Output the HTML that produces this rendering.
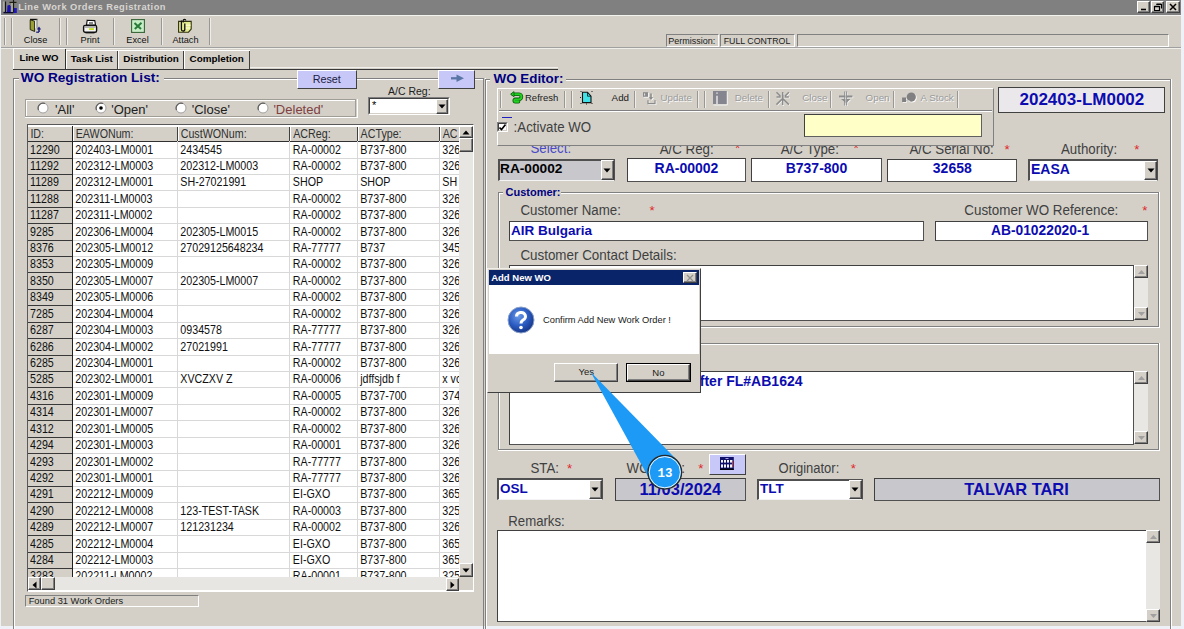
<!DOCTYPE html>
<html><head><meta charset="utf-8"><style>
html,body{margin:0;padding:0;width:1184px;height:629px;overflow:hidden;background:#eef1f8;}
body div, body svg{position:absolute;}
.t{white-space:nowrap;font-family:"Liberation Sans", sans-serif;}
body{font-family:"Liberation Sans", sans-serif;}
</style></head><body>
<div style="left:0;top:0;width:1184px;height:629px;background:#eef1f8;"></div><div style="left:1px;top:0px;width:1180px;height:626px;background:#d4d0c8;"></div><div style="left:1px;top:0px;width:1180px;height:14.5px;background:#808080;"></div><svg style="left:0;top:0;width:18px;height:14px" viewBox="0 0 18 14"><rect x="3.6" y="1.5" width="0.9" height="10" fill="#e8e8d8"/><rect x="11.6" y="3" width="1" height="9" fill="#d8e0b0"/><path d="M7.5 5.5c1.5-1 3-0.5 3.2 1V12.6H7z" fill="#1a10b0"/><rect x="13.8" y="8" width="3" height="5" fill="#2018c0"/><rect x="4.8" y="1.5" width="1.3" height="10.5" fill="#101010"/><rect x="3.5" y="12" width="10" height="1.3" fill="#080830"/><rect x="9.5" y="1.8" width="7" height="1.2" fill="#202010"/><rect x="12.9" y="0" width="1.2" height="12.5" fill="#181818"/></svg><div class="t" style="left:18.20px;top:2.53px;font-size:9.3px;line-height:9.3px;color:#d8d5d0;font-weight:bold;letter-spacing:0.45px;">Line Work Orders Registration</div><div style="left:1137px;top:1px;width:13px;height:12px;background:#d4d0c8;border-top:1px solid #fff;border-left:1px solid #fff;border-bottom:1px solid #404040;border-right:1px solid #404040;box-sizing:border-box;"></div><div style="left:1138px;top:11px;width:11px;height:1px;background:#808080;"></div><div style="left:1148px;top:2px;width:1px;height:10px;background:#808080;"></div><div style="left:1151px;top:1px;width:13px;height:12px;background:#d4d0c8;border-top:1px solid #fff;border-left:1px solid #fff;border-bottom:1px solid #404040;border-right:1px solid #404040;box-sizing:border-box;"></div><div style="left:1152px;top:11px;width:11px;height:1px;background:#808080;"></div><div style="left:1162px;top:2px;width:1px;height:10px;background:#808080;"></div><div style="left:1166px;top:1px;width:13.5px;height:12px;background:#d4d0c8;border-top:1px solid #fff;border-left:1px solid #fff;border-bottom:1px solid #404040;border-right:1px solid #404040;box-sizing:border-box;"></div><div style="left:1167px;top:11px;width:11.5px;height:1px;background:#808080;"></div><div style="left:1177.5px;top:2px;width:1px;height:10px;background:#808080;"></div><svg style="left:1137px;top:1px;width:42px;height:12px" viewBox="0 0 42 12"><path d="M4 8.5h5" stroke="#000" stroke-width="1.6"/><path d="M17.5 5.5h5v4h-5zM19.5 3.5h5v4" stroke="#000" stroke-width="1.2" fill="none"/><path d="M17.5 5.5h5M19.5 3.2h5" stroke="#000" stroke-width="1.6"/><path d="M33 3l6 6M39 3l-6 6" stroke="#000" stroke-width="1.5"/></svg><div style="left:1px;top:14.5px;width:1180px;height:1.5px;background:#f4f2ee;"></div><div style="left:4.0px;top:18px;width:1px;height:27px;background:#9a9792;"></div><div style="left:5.0px;top:18px;width:1px;height:27px;background:#eeede9;"></div><div style="left:11.0px;top:18px;width:1px;height:27px;background:#9a9792;"></div><div style="left:12.0px;top:18px;width:1px;height:27px;background:#eeede9;"></div><div style="left:59.0px;top:18px;width:1px;height:27px;background:#9a9792;"></div><div style="left:60.0px;top:18px;width:1px;height:27px;background:#eeede9;"></div><div style="left:66.0px;top:18px;width:1px;height:27px;background:#9a9792;"></div><div style="left:67.0px;top:18px;width:1px;height:27px;background:#eeede9;"></div><div style="left:113.0px;top:18px;width:1px;height:27px;background:#9a9792;"></div><div style="left:114.0px;top:18px;width:1px;height:27px;background:#eeede9;"></div><div style="left:161.0px;top:18px;width:1px;height:27px;background:#9a9792;"></div><div style="left:162.0px;top:18px;width:1px;height:27px;background:#eeede9;"></div><div style="left:209.0px;top:18px;width:1px;height:27px;background:#9a9792;"></div><div style="left:210.0px;top:18px;width:1px;height:27px;background:#eeede9;"></div><div style="left:1px;top:47px;width:1180px;height:1px;background:#a0a0a0;"></div><div style="left:1px;top:48px;width:1180px;height:1px;background:#f0eee8;"></div><div class="t" style="left:5.50px;top:35.61px;font-size:9.2px;line-height:9.2px;color:#101010;width:60px;text-align:center;">Close</div><div class="t" style="left:60.00px;top:35.61px;font-size:9.2px;line-height:9.2px;color:#101010;width:60px;text-align:center;">Print</div><div class="t" style="left:107.50px;top:35.61px;font-size:9.2px;line-height:9.2px;color:#101010;width:60px;text-align:center;">Excel</div><div class="t" style="left:155.50px;top:35.61px;font-size:9.2px;line-height:9.2px;color:#101010;width:60px;text-align:center;">Attach</div><svg style="left:28px;top:17px;width:16px;height:17px" viewBox="0 0 16 17"><rect x="2.3" y="2.3" width="7" height="9" fill="#fff"/><path d="M2 2.5h7.4" stroke="#101010" stroke-width="1.4"/><path d="M9 2.5v9" stroke="#808080" stroke-width="1.2"/><path d="M2.2 2.8L6.6 4.2V14.5L2.2 12.6z" fill="#9aa032" stroke="#1a1a08" stroke-width="0.9"/><path d="M11 15V11.8" stroke="#20207a" stroke-width="1.6"/><path d="M8.8 12.6H13.2L11 9.6z" fill="#20207a"/><path d="M8.2 15.2H11" stroke="#20207a" stroke-width="1.3"/></svg><svg style="left:82px;top:19px;width:16px;height:15px" viewBox="0 0 16 15"><path d="M5.2 1.2L12.8 1.6L13.5 6H4.5z" fill="#fff" stroke="#101010" stroke-width="1.1"/><path d="M7 4h4" stroke="#101010" stroke-width="1"/><rect x="1.6" y="6.4" width="13" height="6.8" rx="1.5" fill="#f4f4f4" stroke="#101010" stroke-width="1.4"/><path d="M2.5 8h11" stroke="#707070" stroke-width="1"/><rect x="7" y="9.2" width="5" height="1.8" fill="#c8e020"/><path d="M3.5 13.8h9" stroke="#101010" stroke-width="1.2"/></svg><svg style="left:131px;top:19px;width:14px;height:14px" viewBox="0 0 14 14"><rect x="0.6" y="0.6" width="12.8" height="12.8" fill="#d8f4d8" stroke="#3c6a3c" stroke-width="1.2"/><rect x="2" y="2" width="10" height="10" fill="#c4eec4"/><path d="M3.5 4l6.5 6M10.5 3.8L3.8 10" stroke="#2a7a3a" stroke-width="2"/></svg><svg style="left:178px;top:18px;width:15px;height:15px" viewBox="0 0 15 15"><path d="M0.6 3.4H13.2V11L10.5 14.2H0.6z" fill="#e4ec90" stroke="#303010" stroke-width="1.1"/><path d="M6.5 7.2H12.5M6.5 10H12" stroke="#f8f8c0" stroke-width="1.4"/><path d="M5.2 4.5V2.5c0-1.6 2.6-1.6 2.6 0" stroke="#101010" stroke-width="1.2" fill="none"/><path d="M3.4 2.5V11.5c0 2 3.4 2 3.4 0V5.5" stroke="#101010" stroke-width="1.3" fill="none"/></svg><div style="left:666px;top:34px;width:53px;height:13px;border-top:1px solid #808080;border-left:1px solid #808080;border-bottom:1px solid #fff;border-right:1px solid #fff;box-sizing:border-box;"></div><div style="left:720px;top:34px;width:74.5px;height:13px;border-top:1px solid #808080;border-left:1px solid #808080;border-bottom:1px solid #fff;border-right:1px solid #fff;box-sizing:border-box;"></div><div style="left:797px;top:34px;width:372px;height:13px;border-top:1px solid #808080;border-left:1px solid #808080;border-bottom:1px solid #fff;border-right:1px solid #fff;box-sizing:border-box;"></div><div class="t" style="left:668.20px;top:36.58px;font-size:9.0px;line-height:9.0px;color:#202020;">Permission:</div><div class="t" style="left:723.70px;top:36.75px;font-size:8.8px;line-height:8.8px;color:#202020;">FULL CONTROL</div><div style="left:249.5px;top:66.6px;width:308px;height:1px;background:#f2f0ec;"></div><div style="left:13px;top:68.5px;width:544.7px;height:1.1px;background:#383838;"></div><div style="left:13px;top:48.4px;width:52px;height:20.5px;background:#d4d0c8;border-left:1px solid #fff;border-top:1px solid #fff;box-sizing:border-box;"></div><div style="left:64.5px;top:49px;width:1px;height:20px;background:#303030;"></div><div class="t" style="left:13.00px;top:52.87px;font-size:9.6px;line-height:9.6px;color:#000;font-weight:bold;width:52px;text-align:center;">Line WO</div><div style="left:65.5px;top:50px;width:52.5px;height:18.5px;background:#d4d0c8;border-top:1px solid #fff;box-sizing:border-box;"></div><div style="left:117px;top:51px;width:1px;height:18px;background:#404040;"></div><div style="left:65.5px;top:51px;width:1px;height:18px;background:#fff;"></div><div class="t" style="left:65.50px;top:54.22px;font-size:9.9px;line-height:9.9px;color:#000;font-weight:bold;width:52.5px;text-align:center;">Task List</div><div style="left:118px;top:50px;width:66px;height:18.5px;background:#d4d0c8;border-top:1px solid #fff;box-sizing:border-box;"></div><div style="left:183px;top:51px;width:1px;height:18px;background:#404040;"></div><div style="left:118px;top:51px;width:1px;height:18px;background:#fff;"></div><div class="t" style="left:118.00px;top:54.22px;font-size:9.9px;line-height:9.9px;color:#000;font-weight:bold;width:66px;text-align:center;">Distribution</div><div style="left:184px;top:50px;width:65.5px;height:18.5px;background:#d4d0c8;border-top:1px solid #fff;box-sizing:border-box;"></div><div style="left:248.5px;top:51px;width:1px;height:18px;background:#404040;"></div><div style="left:184px;top:51px;width:1px;height:18px;background:#fff;"></div><div class="t" style="left:184.00px;top:54.22px;font-size:9.9px;line-height:9.9px;color:#000;font-weight:bold;width:65.5px;text-align:center;">Completion</div><div style="left:12.8px;top:78.4px;width:471.7px;height:560px;border:1px solid #808080;box-sizing:border-box;"></div><div style="left:13.8px;top:79.4px;width:469.7px;height:558px;border:1px solid #fff;box-sizing:border-box;border-right:none;border-bottom:none;"></div><div style="left:12.8px;top:638.4px;width:472.7px;height:1px;background:#fff;"></div><div style="left:484.5px;top:78.4px;width:1px;height:561px;background:#fff;"></div><div style="left:19px;top:71px;width:145px;height:14px;background:#d4d0c8;"></div><div class="t" style="left:20.80px;top:71.29px;font-size:13.6px;line-height:13.6px;color:#000080;font-weight:bold;">WO Registration List:</div><div style="left:296.5px;top:70px;width:60.5px;height:18.5px;background:#c8c8f8;border-top:1px solid #fff;border-left:1px solid #fff;border-bottom:1px solid #404040;border-right:1px solid #404040;box-sizing:border-box;"></div><div class="t" style="left:296.50px;top:74.46px;font-size:10.8px;line-height:10.8px;color:#202040;width:60.5px;text-align:center;">Reset</div><div style="left:438.1px;top:70.1px;width:37px;height:18.7px;background:#c8c8f8;border-top:1px solid #fff;border-left:1px solid #fff;border-bottom:1px solid #404040;border-right:1px solid #404040;box-sizing:border-box;"></div><svg style="left:449.5px;top:74px;width:15px;height:9px" viewBox="0 0 15 9"><path d="M1 4.3h8" stroke="#5a76a6" stroke-width="2.3"/><path d="M6.5 0.6l7.5 3.7-7.5 3.8z" fill="#5a76a6"/></svg><div style="left:25.3px;top:99.4px;width:331.2px;height:18px;border:1px solid #a09c96;box-sizing:border-box;"></div><div style="left:26.3px;top:100.4px;width:329.2px;height:16px;border-top:1px solid #fff;border-left:1px solid #fff;box-sizing:border-box;"></div><div style="left:25.3px;top:117.4px;width:332.2px;height:1px;background:#fff;"></div><div style="left:356.5px;top:99.4px;width:1px;height:19px;background:#fff;"></div><svg style="left:37.20px;top:101.80px;width:12px;height:12px" viewBox="0 0 12 12"><circle cx="6" cy="6" r="5" fill="#fff" stroke="#a0a0a0" stroke-width="1"/><path d="M1.5 8A5 5 0 0 1 8 1.5" stroke="#606060" stroke-width="1.2" fill="none"/></svg><div class="t" style="left:55.00px;top:102.60px;font-size:13px;line-height:13px;color:#202020;">'All'</div><svg style="left:94.50px;top:101.80px;width:12px;height:12px" viewBox="0 0 12 12"><circle cx="6" cy="6" r="5" fill="#fff" stroke="#a0a0a0" stroke-width="1"/><path d="M1.5 8A5 5 0 0 1 8 1.5" stroke="#606060" stroke-width="1.2" fill="none"/><circle cx="6" cy="6" r="1.8" fill="#000"/></svg><div class="t" style="left:111.20px;top:102.60px;font-size:13px;line-height:13px;color:#202020;">'Open'</div><svg style="left:174.80px;top:101.80px;width:12px;height:12px" viewBox="0 0 12 12"><circle cx="6" cy="6" r="5" fill="#fff" stroke="#a0a0a0" stroke-width="1"/><path d="M1.5 8A5 5 0 0 1 8 1.5" stroke="#606060" stroke-width="1.2" fill="none"/></svg><div class="t" style="left:191.70px;top:102.60px;font-size:13px;line-height:13px;color:#202020;">'Close'</div><svg style="left:257.40px;top:101.80px;width:12px;height:12px" viewBox="0 0 12 12"><circle cx="6" cy="6" r="5" fill="#fff" stroke="#a0a0a0" stroke-width="1"/><path d="M1.5 8A5 5 0 0 1 8 1.5" stroke="#606060" stroke-width="1.2" fill="none"/></svg><div class="t" style="left:273.40px;top:102.60px;font-size:13px;line-height:13px;color:#804040;">'Deleted'</div><div class="t" style="left:388.00px;top:86.11px;font-size:10.5px;line-height:10.5px;color:#202020;">A/C Reg:</div><div style="left:367.6px;top:97.2px;width:82px;height:18px;background:#fff;border-top:1px solid #808080;border-left:1px solid #808080;border-bottom:1px solid #fff;border-right:1px solid #fff;box-sizing:border-box;"></div><div style="left:368.6px;top:98.2px;width:80px;height:16px;border-top:1px solid #404040;border-left:1px solid #404040;border-bottom:1px solid #d4d0c8;border-right:1px solid #d4d0c8;box-sizing:border-box;"></div><div class="t" style="left:372.00px;top:99.69px;font-size:11px;line-height:11px;color:#000;">*</div><div style="left:435.5px;top:98.8px;width:12.5px;height:15px;background:#d4d0c8;border-top:1px solid #fff;border-left:1px solid #fff;border-bottom:1px solid #404040;border-right:1px solid #404040;box-sizing:border-box;"></div><div style="left:436.5px;top:111.8px;width:10.5px;height:1px;background:#808080;"></div><div style="left:446.0px;top:99.8px;width:1px;height:13px;background:#808080;"></div><svg style="left:437.75px;top:104.30px;width:8px;height:5px" viewBox="0 0 8 5"><path d="M0.5 0.5h7l-3.5 4z" fill="#000"/></svg><div style="left:26.5px;top:124.2px;width:447.5px;height:468.2px;background:#fff;border-top:1.6px solid #585858;border-left:1.6px solid #585858;border-right:1px solid #fff;border-bottom:1px solid #fff;box-sizing:border-box;"></div><div style="left:28px;top:125.9px;width:430.5px;height:451.3px;overflow:hidden;"><div style="left:0.00px;top:-1.50px;width:440.00px;height:16.80px;background:#d4d0c8;"></div><div style="left:0.00px;top:-1.50px;width:44.30px;height:470.00px;background:#d4d0c8;"></div><div style="left:43.80px;top:-1.50px;width:1.00px;height:16.80px;#;background:#404040;"></div><div style="left:44.80px;top:-0.40px;width:1.00px;height:15.70px;background:#fff;"></div><div style="left:148.80px;top:-1.50px;width:1.00px;height:16.80px;#;background:#404040;"></div><div style="left:149.80px;top:-0.40px;width:1.00px;height:15.70px;background:#fff;"></div><div style="left:261.30px;top:-1.50px;width:1.00px;height:16.80px;#;background:#404040;"></div><div style="left:262.30px;top:-0.40px;width:1.00px;height:15.70px;background:#fff;"></div><div style="left:328.70px;top:-1.50px;width:1.00px;height:16.80px;#;background:#404040;"></div><div style="left:329.70px;top:-0.40px;width:1.00px;height:15.70px;background:#fff;"></div><div style="left:410.80px;top:-1.50px;width:1.00px;height:16.80px;#;background:#404040;"></div><div style="left:411.80px;top:-0.40px;width:1.00px;height:15.70px;background:#fff;"></div><div style="left:0.00px;top:-0.40px;width:440.00px;height:1.00px;background:#fff;"></div><div style="left:0.00px;top:15.30px;width:440.00px;height:1.20px;background:#303030;"></div><div class="t" style="left:2.40px;top:3.04px;font-size:10.7px;line-height:10.7px;color:#303030;transform:scaleY(1.13);transform-origin:0 9.06px;">ID:</div><div class="t" style="left:47.70px;top:3.04px;font-size:10.7px;line-height:10.7px;color:#303030;transform:scaleY(1.13);transform-origin:0 9.06px;">EAWONum:</div><div class="t" style="left:152.70px;top:3.04px;font-size:10.7px;line-height:10.7px;color:#303030;transform:scaleY(1.13);transform-origin:0 9.06px;">CustWONum:</div><div class="t" style="left:265.20px;top:3.04px;font-size:10.7px;line-height:10.7px;color:#303030;transform:scaleY(1.13);transform-origin:0 9.06px;">ACReg:</div><div class="t" style="left:332.60px;top:3.04px;font-size:10.7px;line-height:10.7px;color:#303030;transform:scaleY(1.13);transform-origin:0 9.06px;">ACType:</div><div class="t" style="left:414.70px;top:3.04px;font-size:10.7px;line-height:10.7px;color:#303030;transform:scaleY(1.13);transform-origin:0 9.06px;">AC Serial:</div><div style="left:44.30px;top:32.10px;width:440.00px;height:1.00px;background:#d8d8d8;"></div><div style="left:0.00px;top:32.10px;width:44.30px;height:1.00px;background:#383838;"></div><div class="t" style="left:2.00px;top:18.64px;font-size:10.7px;line-height:10.7px;color:#101010;transform:scaleY(1.13);transform-origin:0 9.06px;">12290</div><div class="t" style="left:47.30px;top:18.64px;font-size:10.7px;line-height:10.7px;color:#101010;transform:scaleY(1.13);transform-origin:0 9.06px;">202403-LM0001</div><div class="t" style="left:152.30px;top:18.64px;font-size:10.7px;line-height:10.7px;color:#101010;transform:scaleY(1.13);transform-origin:0 9.06px;">2434545</div><div class="t" style="left:264.80px;top:18.64px;font-size:10.7px;line-height:10.7px;color:#101010;transform:scaleY(1.13);transform-origin:0 9.06px;">RA-00002</div><div class="t" style="left:332.20px;top:18.64px;font-size:10.7px;line-height:10.7px;color:#101010;transform:scaleY(1.13);transform-origin:0 9.06px;">B737-800</div><div class="t" style="left:414.30px;top:18.64px;font-size:10.7px;line-height:10.7px;color:#101010;transform:scaleY(1.13);transform-origin:0 9.06px;">32658</div><div style="left:44.30px;top:48.10px;width:440.00px;height:1.00px;background:#d8d8d8;"></div><div style="left:0.00px;top:48.10px;width:44.30px;height:1.00px;background:#383838;"></div><div class="t" style="left:2.00px;top:35.06px;font-size:10.7px;line-height:10.7px;color:#101010;transform:scaleY(1.13);transform-origin:0 9.06px;">11292</div><div class="t" style="left:47.30px;top:35.06px;font-size:10.7px;line-height:10.7px;color:#101010;transform:scaleY(1.13);transform-origin:0 9.06px;">202312-LM0003</div><div class="t" style="left:152.30px;top:35.06px;font-size:10.7px;line-height:10.7px;color:#101010;transform:scaleY(1.13);transform-origin:0 9.06px;">202312-LM0003</div><div class="t" style="left:264.80px;top:35.06px;font-size:10.7px;line-height:10.7px;color:#101010;transform:scaleY(1.13);transform-origin:0 9.06px;">RA-00002</div><div class="t" style="left:332.20px;top:35.06px;font-size:10.7px;line-height:10.7px;color:#101010;transform:scaleY(1.13);transform-origin:0 9.06px;">B737-800</div><div class="t" style="left:414.30px;top:35.06px;font-size:10.7px;line-height:10.7px;color:#101010;transform:scaleY(1.13);transform-origin:0 9.06px;">32658</div><div style="left:44.30px;top:64.10px;width:440.00px;height:1.00px;background:#d8d8d8;"></div><div style="left:0.00px;top:64.10px;width:44.30px;height:1.00px;background:#383838;"></div><div class="t" style="left:2.00px;top:51.48px;font-size:10.7px;line-height:10.7px;color:#101010;transform:scaleY(1.13);transform-origin:0 9.06px;">11289</div><div class="t" style="left:47.30px;top:51.48px;font-size:10.7px;line-height:10.7px;color:#101010;transform:scaleY(1.13);transform-origin:0 9.06px;">202312-LM0001</div><div class="t" style="left:152.30px;top:51.48px;font-size:10.7px;line-height:10.7px;color:#101010;transform:scaleY(1.13);transform-origin:0 9.06px;">SH-27021991</div><div class="t" style="left:264.80px;top:51.48px;font-size:10.7px;line-height:10.7px;color:#101010;transform:scaleY(1.13);transform-origin:0 9.06px;">SHOP</div><div class="t" style="left:332.20px;top:51.48px;font-size:10.7px;line-height:10.7px;color:#101010;transform:scaleY(1.13);transform-origin:0 9.06px;">SHOP</div><div class="t" style="left:414.30px;top:51.48px;font-size:10.7px;line-height:10.7px;color:#101010;transform:scaleY(1.13);transform-origin:0 9.06px;">SH</div><div style="left:44.30px;top:81.10px;width:440.00px;height:1.00px;background:#d8d8d8;"></div><div style="left:0.00px;top:81.10px;width:44.30px;height:1.00px;background:#383838;"></div><div class="t" style="left:2.00px;top:67.90px;font-size:10.7px;line-height:10.7px;color:#101010;transform:scaleY(1.13);transform-origin:0 9.06px;">11288</div><div class="t" style="left:47.30px;top:67.90px;font-size:10.7px;line-height:10.7px;color:#101010;transform:scaleY(1.13);transform-origin:0 9.06px;">202311-LM0003</div><div class="t" style="left:264.80px;top:67.90px;font-size:10.7px;line-height:10.7px;color:#101010;transform:scaleY(1.13);transform-origin:0 9.06px;">RA-00002</div><div class="t" style="left:332.20px;top:67.90px;font-size:10.7px;line-height:10.7px;color:#101010;transform:scaleY(1.13);transform-origin:0 9.06px;">B737-800</div><div class="t" style="left:414.30px;top:67.90px;font-size:10.7px;line-height:10.7px;color:#101010;transform:scaleY(1.13);transform-origin:0 9.06px;">32658</div><div style="left:44.30px;top:97.10px;width:440.00px;height:1.00px;background:#d8d8d8;"></div><div style="left:0.00px;top:97.10px;width:44.30px;height:1.00px;background:#383838;"></div><div class="t" style="left:2.00px;top:84.32px;font-size:10.7px;line-height:10.7px;color:#101010;transform:scaleY(1.13);transform-origin:0 9.06px;">11287</div><div class="t" style="left:47.30px;top:84.32px;font-size:10.7px;line-height:10.7px;color:#101010;transform:scaleY(1.13);transform-origin:0 9.06px;">202311-LM0002</div><div class="t" style="left:264.80px;top:84.32px;font-size:10.7px;line-height:10.7px;color:#101010;transform:scaleY(1.13);transform-origin:0 9.06px;">RA-00002</div><div class="t" style="left:332.20px;top:84.32px;font-size:10.7px;line-height:10.7px;color:#101010;transform:scaleY(1.13);transform-origin:0 9.06px;">B737-800</div><div class="t" style="left:414.30px;top:84.32px;font-size:10.7px;line-height:10.7px;color:#101010;transform:scaleY(1.13);transform-origin:0 9.06px;">32658</div><div style="left:44.30px;top:114.10px;width:440.00px;height:1.00px;background:#d8d8d8;"></div><div style="left:0.00px;top:114.10px;width:44.30px;height:1.00px;background:#383838;"></div><div class="t" style="left:2.00px;top:100.74px;font-size:10.7px;line-height:10.7px;color:#101010;transform:scaleY(1.13);transform-origin:0 9.06px;">9285</div><div class="t" style="left:47.30px;top:100.74px;font-size:10.7px;line-height:10.7px;color:#101010;transform:scaleY(1.13);transform-origin:0 9.06px;">202306-LM0004</div><div class="t" style="left:152.30px;top:100.74px;font-size:10.7px;line-height:10.7px;color:#101010;transform:scaleY(1.13);transform-origin:0 9.06px;">202305-LM0015</div><div class="t" style="left:264.80px;top:100.74px;font-size:10.7px;line-height:10.7px;color:#101010;transform:scaleY(1.13);transform-origin:0 9.06px;">RA-00002</div><div class="t" style="left:332.20px;top:100.74px;font-size:10.7px;line-height:10.7px;color:#101010;transform:scaleY(1.13);transform-origin:0 9.06px;">B737-800</div><div class="t" style="left:414.30px;top:100.74px;font-size:10.7px;line-height:10.7px;color:#101010;transform:scaleY(1.13);transform-origin:0 9.06px;">32658</div><div style="left:44.30px;top:130.10px;width:440.00px;height:1.00px;background:#d8d8d8;"></div><div style="left:0.00px;top:130.10px;width:44.30px;height:1.00px;background:#383838;"></div><div class="t" style="left:2.00px;top:117.16px;font-size:10.7px;line-height:10.7px;color:#101010;transform:scaleY(1.13);transform-origin:0 9.06px;">8376</div><div class="t" style="left:47.30px;top:117.16px;font-size:10.7px;line-height:10.7px;color:#101010;transform:scaleY(1.13);transform-origin:0 9.06px;">202305-LM0012</div><div class="t" style="left:152.30px;top:117.16px;font-size:10.7px;line-height:10.7px;color:#101010;transform:scaleY(1.13);transform-origin:0 9.06px;">27029125648234</div><div class="t" style="left:264.80px;top:117.16px;font-size:10.7px;line-height:10.7px;color:#101010;transform:scaleY(1.13);transform-origin:0 9.06px;">RA-77777</div><div class="t" style="left:332.20px;top:117.16px;font-size:10.7px;line-height:10.7px;color:#101010;transform:scaleY(1.13);transform-origin:0 9.06px;">B737</div><div class="t" style="left:414.30px;top:117.16px;font-size:10.7px;line-height:10.7px;color:#101010;transform:scaleY(1.13);transform-origin:0 9.06px;">34567</div><div style="left:44.30px;top:146.10px;width:440.00px;height:1.00px;background:#d8d8d8;"></div><div style="left:0.00px;top:146.10px;width:44.30px;height:1.00px;background:#383838;"></div><div class="t" style="left:2.00px;top:133.58px;font-size:10.7px;line-height:10.7px;color:#101010;transform:scaleY(1.13);transform-origin:0 9.06px;">8353</div><div class="t" style="left:47.30px;top:133.58px;font-size:10.7px;line-height:10.7px;color:#101010;transform:scaleY(1.13);transform-origin:0 9.06px;">202305-LM0009</div><div class="t" style="left:264.80px;top:133.58px;font-size:10.7px;line-height:10.7px;color:#101010;transform:scaleY(1.13);transform-origin:0 9.06px;">RA-00002</div><div class="t" style="left:332.20px;top:133.58px;font-size:10.7px;line-height:10.7px;color:#101010;transform:scaleY(1.13);transform-origin:0 9.06px;">B737-800</div><div class="t" style="left:414.30px;top:133.58px;font-size:10.7px;line-height:10.7px;color:#101010;transform:scaleY(1.13);transform-origin:0 9.06px;">32658</div><div style="left:44.30px;top:163.10px;width:440.00px;height:1.00px;background:#d8d8d8;"></div><div style="left:0.00px;top:163.10px;width:44.30px;height:1.00px;background:#383838;"></div><div class="t" style="left:2.00px;top:150.00px;font-size:10.7px;line-height:10.7px;color:#101010;transform:scaleY(1.13);transform-origin:0 9.06px;">8350</div><div class="t" style="left:47.30px;top:150.00px;font-size:10.7px;line-height:10.7px;color:#101010;transform:scaleY(1.13);transform-origin:0 9.06px;">202305-LM0007</div><div class="t" style="left:152.30px;top:150.00px;font-size:10.7px;line-height:10.7px;color:#101010;transform:scaleY(1.13);transform-origin:0 9.06px;">202305-LM0007</div><div class="t" style="left:264.80px;top:150.00px;font-size:10.7px;line-height:10.7px;color:#101010;transform:scaleY(1.13);transform-origin:0 9.06px;">RA-00002</div><div class="t" style="left:332.20px;top:150.00px;font-size:10.7px;line-height:10.7px;color:#101010;transform:scaleY(1.13);transform-origin:0 9.06px;">B737-800</div><div class="t" style="left:414.30px;top:150.00px;font-size:10.7px;line-height:10.7px;color:#101010;transform:scaleY(1.13);transform-origin:0 9.06px;">32658</div><div style="left:44.30px;top:179.10px;width:440.00px;height:1.00px;background:#d8d8d8;"></div><div style="left:0.00px;top:179.10px;width:44.30px;height:1.00px;background:#383838;"></div><div class="t" style="left:2.00px;top:166.42px;font-size:10.7px;line-height:10.7px;color:#101010;transform:scaleY(1.13);transform-origin:0 9.06px;">8349</div><div class="t" style="left:47.30px;top:166.42px;font-size:10.7px;line-height:10.7px;color:#101010;transform:scaleY(1.13);transform-origin:0 9.06px;">202305-LM0006</div><div class="t" style="left:264.80px;top:166.42px;font-size:10.7px;line-height:10.7px;color:#101010;transform:scaleY(1.13);transform-origin:0 9.06px;">RA-00002</div><div class="t" style="left:332.20px;top:166.42px;font-size:10.7px;line-height:10.7px;color:#101010;transform:scaleY(1.13);transform-origin:0 9.06px;">B737-800</div><div class="t" style="left:414.30px;top:166.42px;font-size:10.7px;line-height:10.7px;color:#101010;transform:scaleY(1.13);transform-origin:0 9.06px;">32658</div><div style="left:44.30px;top:196.10px;width:440.00px;height:1.00px;background:#d8d8d8;"></div><div style="left:0.00px;top:196.10px;width:44.30px;height:1.00px;background:#383838;"></div><div class="t" style="left:2.00px;top:182.84px;font-size:10.7px;line-height:10.7px;color:#101010;transform:scaleY(1.13);transform-origin:0 9.06px;">7285</div><div class="t" style="left:47.30px;top:182.84px;font-size:10.7px;line-height:10.7px;color:#101010;transform:scaleY(1.13);transform-origin:0 9.06px;">202304-LM0004</div><div class="t" style="left:264.80px;top:182.84px;font-size:10.7px;line-height:10.7px;color:#101010;transform:scaleY(1.13);transform-origin:0 9.06px;">RA-00002</div><div class="t" style="left:332.20px;top:182.84px;font-size:10.7px;line-height:10.7px;color:#101010;transform:scaleY(1.13);transform-origin:0 9.06px;">B737-800</div><div class="t" style="left:414.30px;top:182.84px;font-size:10.7px;line-height:10.7px;color:#101010;transform:scaleY(1.13);transform-origin:0 9.06px;">32658</div><div style="left:44.30px;top:212.10px;width:440.00px;height:1.00px;background:#d8d8d8;"></div><div style="left:0.00px;top:212.10px;width:44.30px;height:1.00px;background:#383838;"></div><div class="t" style="left:2.00px;top:199.26px;font-size:10.7px;line-height:10.7px;color:#101010;transform:scaleY(1.13);transform-origin:0 9.06px;">6287</div><div class="t" style="left:47.30px;top:199.26px;font-size:10.7px;line-height:10.7px;color:#101010;transform:scaleY(1.13);transform-origin:0 9.06px;">202304-LM0003</div><div class="t" style="left:152.30px;top:199.26px;font-size:10.7px;line-height:10.7px;color:#101010;transform:scaleY(1.13);transform-origin:0 9.06px;">0934578</div><div class="t" style="left:264.80px;top:199.26px;font-size:10.7px;line-height:10.7px;color:#101010;transform:scaleY(1.13);transform-origin:0 9.06px;">RA-77777</div><div class="t" style="left:332.20px;top:199.26px;font-size:10.7px;line-height:10.7px;color:#101010;transform:scaleY(1.13);transform-origin:0 9.06px;">B737-800</div><div class="t" style="left:414.30px;top:199.26px;font-size:10.7px;line-height:10.7px;color:#101010;transform:scaleY(1.13);transform-origin:0 9.06px;">32658</div><div style="left:44.30px;top:229.10px;width:440.00px;height:1.00px;background:#d8d8d8;"></div><div style="left:0.00px;top:229.10px;width:44.30px;height:1.00px;background:#383838;"></div><div class="t" style="left:2.00px;top:215.68px;font-size:10.7px;line-height:10.7px;color:#101010;transform:scaleY(1.13);transform-origin:0 9.06px;">6286</div><div class="t" style="left:47.30px;top:215.68px;font-size:10.7px;line-height:10.7px;color:#101010;transform:scaleY(1.13);transform-origin:0 9.06px;">202304-LM0002</div><div class="t" style="left:152.30px;top:215.68px;font-size:10.7px;line-height:10.7px;color:#101010;transform:scaleY(1.13);transform-origin:0 9.06px;">27021991</div><div class="t" style="left:264.80px;top:215.68px;font-size:10.7px;line-height:10.7px;color:#101010;transform:scaleY(1.13);transform-origin:0 9.06px;">RA-77777</div><div class="t" style="left:332.20px;top:215.68px;font-size:10.7px;line-height:10.7px;color:#101010;transform:scaleY(1.13);transform-origin:0 9.06px;">B737-800</div><div class="t" style="left:414.30px;top:215.68px;font-size:10.7px;line-height:10.7px;color:#101010;transform:scaleY(1.13);transform-origin:0 9.06px;">32658</div><div style="left:44.30px;top:245.10px;width:440.00px;height:1.00px;background:#d8d8d8;"></div><div style="left:0.00px;top:245.10px;width:44.30px;height:1.00px;background:#383838;"></div><div class="t" style="left:2.00px;top:232.10px;font-size:10.7px;line-height:10.7px;color:#101010;transform:scaleY(1.13);transform-origin:0 9.06px;">6285</div><div class="t" style="left:47.30px;top:232.10px;font-size:10.7px;line-height:10.7px;color:#101010;transform:scaleY(1.13);transform-origin:0 9.06px;">202304-LM0001</div><div class="t" style="left:264.80px;top:232.10px;font-size:10.7px;line-height:10.7px;color:#101010;transform:scaleY(1.13);transform-origin:0 9.06px;">RA-00002</div><div class="t" style="left:332.20px;top:232.10px;font-size:10.7px;line-height:10.7px;color:#101010;transform:scaleY(1.13);transform-origin:0 9.06px;">B737-800</div><div class="t" style="left:414.30px;top:232.10px;font-size:10.7px;line-height:10.7px;color:#101010;transform:scaleY(1.13);transform-origin:0 9.06px;">32658</div><div style="left:44.30px;top:261.10px;width:440.00px;height:1.00px;background:#d8d8d8;"></div><div style="left:0.00px;top:261.10px;width:44.30px;height:1.00px;background:#383838;"></div><div class="t" style="left:2.00px;top:248.52px;font-size:10.7px;line-height:10.7px;color:#101010;transform:scaleY(1.13);transform-origin:0 9.06px;">5285</div><div class="t" style="left:47.30px;top:248.52px;font-size:10.7px;line-height:10.7px;color:#101010;transform:scaleY(1.13);transform-origin:0 9.06px;">202302-LM0001</div><div class="t" style="left:152.30px;top:248.52px;font-size:10.7px;line-height:10.7px;color:#101010;transform:scaleY(1.13);transform-origin:0 9.06px;">XVCZXV Z</div><div class="t" style="left:264.80px;top:248.52px;font-size:10.7px;line-height:10.7px;color:#101010;transform:scaleY(1.13);transform-origin:0 9.06px;">RA-00006</div><div class="t" style="left:332.20px;top:248.52px;font-size:10.7px;line-height:10.7px;color:#101010;transform:scaleY(1.13);transform-origin:0 9.06px;">jdffsjdb f</div><div class="t" style="left:414.30px;top:248.52px;font-size:10.7px;line-height:10.7px;color:#101010;transform:scaleY(1.13);transform-origin:0 9.06px;">x vcx</div><div style="left:44.30px;top:278.10px;width:440.00px;height:1.00px;background:#d8d8d8;"></div><div style="left:0.00px;top:278.10px;width:44.30px;height:1.00px;background:#383838;"></div><div class="t" style="left:2.00px;top:264.94px;font-size:10.7px;line-height:10.7px;color:#101010;transform:scaleY(1.13);transform-origin:0 9.06px;">4316</div><div class="t" style="left:47.30px;top:264.94px;font-size:10.7px;line-height:10.7px;color:#101010;transform:scaleY(1.13);transform-origin:0 9.06px;">202301-LM0009</div><div class="t" style="left:264.80px;top:264.94px;font-size:10.7px;line-height:10.7px;color:#101010;transform:scaleY(1.13);transform-origin:0 9.06px;">RA-00005</div><div class="t" style="left:332.20px;top:264.94px;font-size:10.7px;line-height:10.7px;color:#101010;transform:scaleY(1.13);transform-origin:0 9.06px;">B737-700</div><div class="t" style="left:414.30px;top:264.94px;font-size:10.7px;line-height:10.7px;color:#101010;transform:scaleY(1.13);transform-origin:0 9.06px;">37412</div><div style="left:44.30px;top:294.10px;width:440.00px;height:1.00px;background:#d8d8d8;"></div><div style="left:0.00px;top:294.10px;width:44.30px;height:1.00px;background:#383838;"></div><div class="t" style="left:2.00px;top:281.36px;font-size:10.7px;line-height:10.7px;color:#101010;transform:scaleY(1.13);transform-origin:0 9.06px;">4314</div><div class="t" style="left:47.30px;top:281.36px;font-size:10.7px;line-height:10.7px;color:#101010;transform:scaleY(1.13);transform-origin:0 9.06px;">202301-LM0007</div><div class="t" style="left:264.80px;top:281.36px;font-size:10.7px;line-height:10.7px;color:#101010;transform:scaleY(1.13);transform-origin:0 9.06px;">RA-00002</div><div class="t" style="left:332.20px;top:281.36px;font-size:10.7px;line-height:10.7px;color:#101010;transform:scaleY(1.13);transform-origin:0 9.06px;">B737-800</div><div class="t" style="left:414.30px;top:281.36px;font-size:10.7px;line-height:10.7px;color:#101010;transform:scaleY(1.13);transform-origin:0 9.06px;">32658</div><div style="left:44.30px;top:311.10px;width:440.00px;height:1.00px;background:#d8d8d8;"></div><div style="left:0.00px;top:311.10px;width:44.30px;height:1.00px;background:#383838;"></div><div class="t" style="left:2.00px;top:297.78px;font-size:10.7px;line-height:10.7px;color:#101010;transform:scaleY(1.13);transform-origin:0 9.06px;">4312</div><div class="t" style="left:47.30px;top:297.78px;font-size:10.7px;line-height:10.7px;color:#101010;transform:scaleY(1.13);transform-origin:0 9.06px;">202301-LM0005</div><div class="t" style="left:264.80px;top:297.78px;font-size:10.7px;line-height:10.7px;color:#101010;transform:scaleY(1.13);transform-origin:0 9.06px;">RA-00002</div><div class="t" style="left:332.20px;top:297.78px;font-size:10.7px;line-height:10.7px;color:#101010;transform:scaleY(1.13);transform-origin:0 9.06px;">B737-800</div><div class="t" style="left:414.30px;top:297.78px;font-size:10.7px;line-height:10.7px;color:#101010;transform:scaleY(1.13);transform-origin:0 9.06px;">32658</div><div style="left:44.30px;top:327.10px;width:440.00px;height:1.00px;background:#d8d8d8;"></div><div style="left:0.00px;top:327.10px;width:44.30px;height:1.00px;background:#383838;"></div><div class="t" style="left:2.00px;top:314.20px;font-size:10.7px;line-height:10.7px;color:#101010;transform:scaleY(1.13);transform-origin:0 9.06px;">4294</div><div class="t" style="left:47.30px;top:314.20px;font-size:10.7px;line-height:10.7px;color:#101010;transform:scaleY(1.13);transform-origin:0 9.06px;">202301-LM0003</div><div class="t" style="left:264.80px;top:314.20px;font-size:10.7px;line-height:10.7px;color:#101010;transform:scaleY(1.13);transform-origin:0 9.06px;">RA-00001</div><div class="t" style="left:332.20px;top:314.20px;font-size:10.7px;line-height:10.7px;color:#101010;transform:scaleY(1.13);transform-origin:0 9.06px;">B737-800</div><div class="t" style="left:414.30px;top:314.20px;font-size:10.7px;line-height:10.7px;color:#101010;transform:scaleY(1.13);transform-origin:0 9.06px;">32658</div><div style="left:44.30px;top:344.10px;width:440.00px;height:1.00px;background:#d8d8d8;"></div><div style="left:0.00px;top:344.10px;width:44.30px;height:1.00px;background:#383838;"></div><div class="t" style="left:2.00px;top:330.62px;font-size:10.7px;line-height:10.7px;color:#101010;transform:scaleY(1.13);transform-origin:0 9.06px;">4293</div><div class="t" style="left:47.30px;top:330.62px;font-size:10.7px;line-height:10.7px;color:#101010;transform:scaleY(1.13);transform-origin:0 9.06px;">202301-LM0002</div><div class="t" style="left:264.80px;top:330.62px;font-size:10.7px;line-height:10.7px;color:#101010;transform:scaleY(1.13);transform-origin:0 9.06px;">RA-77777</div><div class="t" style="left:332.20px;top:330.62px;font-size:10.7px;line-height:10.7px;color:#101010;transform:scaleY(1.13);transform-origin:0 9.06px;">B737-800</div><div class="t" style="left:414.30px;top:330.62px;font-size:10.7px;line-height:10.7px;color:#101010;transform:scaleY(1.13);transform-origin:0 9.06px;">32658</div><div style="left:44.30px;top:360.10px;width:440.00px;height:1.00px;background:#d8d8d8;"></div><div style="left:0.00px;top:360.10px;width:44.30px;height:1.00px;background:#383838;"></div><div class="t" style="left:2.00px;top:347.04px;font-size:10.7px;line-height:10.7px;color:#101010;transform:scaleY(1.13);transform-origin:0 9.06px;">4292</div><div class="t" style="left:47.30px;top:347.04px;font-size:10.7px;line-height:10.7px;color:#101010;transform:scaleY(1.13);transform-origin:0 9.06px;">202301-LM0001</div><div class="t" style="left:264.80px;top:347.04px;font-size:10.7px;line-height:10.7px;color:#101010;transform:scaleY(1.13);transform-origin:0 9.06px;">RA-77777</div><div class="t" style="left:332.20px;top:347.04px;font-size:10.7px;line-height:10.7px;color:#101010;transform:scaleY(1.13);transform-origin:0 9.06px;">B737-800</div><div class="t" style="left:414.30px;top:347.04px;font-size:10.7px;line-height:10.7px;color:#101010;transform:scaleY(1.13);transform-origin:0 9.06px;">32658</div><div style="left:44.30px;top:376.10px;width:440.00px;height:1.00px;background:#d8d8d8;"></div><div style="left:0.00px;top:376.10px;width:44.30px;height:1.00px;background:#383838;"></div><div class="t" style="left:2.00px;top:363.46px;font-size:10.7px;line-height:10.7px;color:#101010;transform:scaleY(1.13);transform-origin:0 9.06px;">4291</div><div class="t" style="left:47.30px;top:363.46px;font-size:10.7px;line-height:10.7px;color:#101010;transform:scaleY(1.13);transform-origin:0 9.06px;">202212-LM0009</div><div class="t" style="left:264.80px;top:363.46px;font-size:10.7px;line-height:10.7px;color:#101010;transform:scaleY(1.13);transform-origin:0 9.06px;">EI-GXO</div><div class="t" style="left:332.20px;top:363.46px;font-size:10.7px;line-height:10.7px;color:#101010;transform:scaleY(1.13);transform-origin:0 9.06px;">B737-800</div><div class="t" style="left:414.30px;top:363.46px;font-size:10.7px;line-height:10.7px;color:#101010;transform:scaleY(1.13);transform-origin:0 9.06px;">36554</div><div style="left:44.30px;top:393.10px;width:440.00px;height:1.00px;background:#d8d8d8;"></div><div style="left:0.00px;top:393.10px;width:44.30px;height:1.00px;background:#383838;"></div><div class="t" style="left:2.00px;top:379.88px;font-size:10.7px;line-height:10.7px;color:#101010;transform:scaleY(1.13);transform-origin:0 9.06px;">4290</div><div class="t" style="left:47.30px;top:379.88px;font-size:10.7px;line-height:10.7px;color:#101010;transform:scaleY(1.13);transform-origin:0 9.06px;">202212-LM0008</div><div class="t" style="left:152.30px;top:379.88px;font-size:10.7px;line-height:10.7px;color:#101010;transform:scaleY(1.13);transform-origin:0 9.06px;">123-TEST-TASK</div><div class="t" style="left:264.80px;top:379.88px;font-size:10.7px;line-height:10.7px;color:#101010;transform:scaleY(1.13);transform-origin:0 9.06px;">RA-00003</div><div class="t" style="left:332.20px;top:379.88px;font-size:10.7px;line-height:10.7px;color:#101010;transform:scaleY(1.13);transform-origin:0 9.06px;">B737-800</div><div class="t" style="left:414.30px;top:379.88px;font-size:10.7px;line-height:10.7px;color:#101010;transform:scaleY(1.13);transform-origin:0 9.06px;">32554</div><div style="left:44.30px;top:409.10px;width:440.00px;height:1.00px;background:#d8d8d8;"></div><div style="left:0.00px;top:409.10px;width:44.30px;height:1.00px;background:#383838;"></div><div class="t" style="left:2.00px;top:396.30px;font-size:10.7px;line-height:10.7px;color:#101010;transform:scaleY(1.13);transform-origin:0 9.06px;">4289</div><div class="t" style="left:47.30px;top:396.30px;font-size:10.7px;line-height:10.7px;color:#101010;transform:scaleY(1.13);transform-origin:0 9.06px;">202212-LM0007</div><div class="t" style="left:152.30px;top:396.30px;font-size:10.7px;line-height:10.7px;color:#101010;transform:scaleY(1.13);transform-origin:0 9.06px;">121231234</div><div class="t" style="left:264.80px;top:396.30px;font-size:10.7px;line-height:10.7px;color:#101010;transform:scaleY(1.13);transform-origin:0 9.06px;">RA-00002</div><div class="t" style="left:332.20px;top:396.30px;font-size:10.7px;line-height:10.7px;color:#101010;transform:scaleY(1.13);transform-origin:0 9.06px;">B737-800</div><div class="t" style="left:414.30px;top:396.30px;font-size:10.7px;line-height:10.7px;color:#101010;transform:scaleY(1.13);transform-origin:0 9.06px;">32658</div><div style="left:44.30px;top:426.10px;width:440.00px;height:1.00px;background:#d8d8d8;"></div><div style="left:0.00px;top:426.10px;width:44.30px;height:1.00px;background:#383838;"></div><div class="t" style="left:2.00px;top:412.72px;font-size:10.7px;line-height:10.7px;color:#101010;transform:scaleY(1.13);transform-origin:0 9.06px;">4285</div><div class="t" style="left:47.30px;top:412.72px;font-size:10.7px;line-height:10.7px;color:#101010;transform:scaleY(1.13);transform-origin:0 9.06px;">202212-LM0004</div><div class="t" style="left:264.80px;top:412.72px;font-size:10.7px;line-height:10.7px;color:#101010;transform:scaleY(1.13);transform-origin:0 9.06px;">EI-GXO</div><div class="t" style="left:332.20px;top:412.72px;font-size:10.7px;line-height:10.7px;color:#101010;transform:scaleY(1.13);transform-origin:0 9.06px;">B737-800</div><div class="t" style="left:414.30px;top:412.72px;font-size:10.7px;line-height:10.7px;color:#101010;transform:scaleY(1.13);transform-origin:0 9.06px;">36554</div><div style="left:44.30px;top:442.10px;width:440.00px;height:1.00px;background:#d8d8d8;"></div><div style="left:0.00px;top:442.10px;width:44.30px;height:1.00px;background:#383838;"></div><div class="t" style="left:2.00px;top:429.14px;font-size:10.7px;line-height:10.7px;color:#101010;transform:scaleY(1.13);transform-origin:0 9.06px;">4284</div><div class="t" style="left:47.30px;top:429.14px;font-size:10.7px;line-height:10.7px;color:#101010;transform:scaleY(1.13);transform-origin:0 9.06px;">202212-LM0003</div><div class="t" style="left:264.80px;top:429.14px;font-size:10.7px;line-height:10.7px;color:#101010;transform:scaleY(1.13);transform-origin:0 9.06px;">EI-GXO</div><div class="t" style="left:332.20px;top:429.14px;font-size:10.7px;line-height:10.7px;color:#101010;transform:scaleY(1.13);transform-origin:0 9.06px;">B737-800</div><div class="t" style="left:414.30px;top:429.14px;font-size:10.7px;line-height:10.7px;color:#101010;transform:scaleY(1.13);transform-origin:0 9.06px;">36554</div><div style="left:44.30px;top:458.10px;width:440.00px;height:1.00px;background:#d8d8d8;"></div><div style="left:0.00px;top:458.10px;width:44.30px;height:1.00px;background:#383838;"></div><div class="t" style="left:2.00px;top:445.56px;font-size:10.7px;line-height:10.7px;color:#101010;transform:scaleY(1.13);transform-origin:0 9.06px;">3283</div><div class="t" style="left:47.30px;top:445.56px;font-size:10.7px;line-height:10.7px;color:#101010;transform:scaleY(1.13);transform-origin:0 9.06px;">202211-LM0002</div><div class="t" style="left:264.80px;top:445.56px;font-size:10.7px;line-height:10.7px;color:#101010;transform:scaleY(1.13);transform-origin:0 9.06px;">RA-00001</div><div class="t" style="left:332.20px;top:445.56px;font-size:10.7px;line-height:10.7px;color:#101010;transform:scaleY(1.13);transform-origin:0 9.06px;">B737-800</div><div class="t" style="left:414.30px;top:445.56px;font-size:10.7px;line-height:10.7px;color:#101010;transform:scaleY(1.13);transform-origin:0 9.06px;">32554</div><div style="left:148.80px;top:15.30px;width:1.00px;height:460.00px;background:#d8d8d8;"></div><div style="left:261.30px;top:15.30px;width:1.00px;height:460.00px;background:#d8d8d8;"></div><div style="left:328.70px;top:15.30px;width:1.00px;height:460.00px;background:#d8d8d8;"></div><div style="left:410.80px;top:15.30px;width:1.00px;height:460.00px;background:#d8d8d8;"></div><div style="left:43.80px;top:-1.50px;width:1.20px;height:470.00px;background:#202020;"></div></div><div style="left:459.3px;top:125.9px;width:13.699999999999989px;height:451.3px;background:#e8e6e2;"></div><div style="left:459.3px;top:125.9px;width:13.5px;height:12.5px;background:#d4d0c8;border-top:1px solid #fff;border-left:1px solid #fff;border-bottom:1px solid #404040;border-right:1px solid #404040;box-sizing:border-box;"></div><div style="left:460.3px;top:136.4px;width:11.5px;height:1px;background:#808080;"></div><div style="left:470.8px;top:126.9px;width:1px;height:10.5px;background:#808080;"></div><svg style="left:462.3px;top:129.5px;width:8px;height:5px" viewBox="0 0 8 5"><path d="M0.5 4.5h7l-3.5-4z" fill="#000"/></svg><div style="left:459.3px;top:138.4px;width:13.5px;height:14px;background:#d4d0c8;border-top:1px solid #fff;border-left:1px solid #fff;border-bottom:1px solid #404040;border-right:1px solid #404040;box-sizing:border-box;"></div><div style="left:460.3px;top:150.4px;width:11.5px;height:1px;background:#808080;"></div><div style="left:470.8px;top:139.4px;width:1px;height:12px;background:#808080;"></div><div style="left:459.3px;top:563.4px;width:13.5px;height:13.5px;background:#d4d0c8;border-top:1px solid #fff;border-left:1px solid #fff;border-bottom:1px solid #404040;border-right:1px solid #404040;box-sizing:border-box;"></div><div style="left:460.3px;top:574.9px;width:11.5px;height:1px;background:#808080;"></div><div style="left:470.8px;top:564.4px;width:1px;height:11.5px;background:#808080;"></div><svg style="left:462.3px;top:568px;width:8px;height:5px" viewBox="0 0 8 5"><path d="M0.5 0.5h7l-3.5 4z" fill="#000"/></svg><div style="left:28px;top:577.2px;width:431.3px;height:13px;background:#e8e6e2;"></div><div style="left:27.6px;top:577.2px;width:13px;height:13px;background:#d4d0c8;border-top:1px solid #fff;border-left:1px solid #fff;border-bottom:1px solid #404040;border-right:1px solid #404040;box-sizing:border-box;"></div><div style="left:28.6px;top:588.2px;width:11px;height:1px;background:#808080;"></div><div style="left:38.6px;top:578.2px;width:1px;height:11px;background:#808080;"></div><svg style="left:31.5px;top:580.5px;width:5px;height:8px" viewBox="0 0 5 8"><path d="M4.5 0.5v7l-4-3.5z" fill="#000"/></svg><div style="left:41px;top:577.2px;width:14.3px;height:13px;background:#d4d0c8;border-top:1px solid #fff;border-left:1px solid #fff;border-bottom:1px solid #404040;border-right:1px solid #404040;box-sizing:border-box;"></div><div style="left:42px;top:588.2px;width:12.3px;height:1px;background:#808080;"></div><div style="left:53.3px;top:578.2px;width:1px;height:11px;background:#808080;"></div><div style="left:445.7px;top:577.5px;width:13px;height:13px;background:#d4d0c8;border-top:1px solid #fff;border-left:1px solid #fff;border-bottom:1px solid #404040;border-right:1px solid #404040;box-sizing:border-box;"></div><div style="left:446.7px;top:588.5px;width:11px;height:1px;background:#808080;"></div><div style="left:456.7px;top:578.5px;width:1px;height:11px;background:#808080;"></div><svg style="left:450px;top:580.5px;width:5px;height:8px" viewBox="0 0 5 8"><path d="M0.5 0.5v7l4-3.5z" fill="#000"/></svg><div style="left:459.3px;top:577.2px;width:14px;height:13px;background:#d4d0c8;"></div><div style="left:25.3px;top:594.7px;width:173.3px;height:12.2px;border-top:1px solid #808080;border-left:1px solid #808080;border-bottom:1px solid #fff;border-right:1px solid #fff;box-sizing:border-box;"></div><div class="t" style="left:28.70px;top:596.53px;font-size:9.3px;line-height:9.3px;color:#202020;">Found 31 Work Orders</div><div style="left:484.6px;top:78.6px;width:686.2px;height:560px;border:1px solid #808080;box-sizing:border-box;"></div><div style="left:485.6px;top:79.6px;width:684.2px;height:558px;border:1px solid #fff;box-sizing:border-box;border-right:none;border-bottom:none;"></div><div style="left:484.6px;top:638.6px;width:687.2px;height:1px;background:#fff;"></div><div style="left:1170.8000000000002px;top:78.6px;width:1px;height:561px;background:#fff;"></div><div style="left:490px;top:71px;width:76px;height:14px;background:#d4d0c8;"></div><div class="t" style="left:493.50px;top:71.66px;font-size:13.4px;line-height:13.4px;color:#000080;font-weight:bold;">WO Editor:</div><div style="left:497.4px;top:88px;width:497px;height:58px;border-top:1px solid #fff;border-left:1px solid #fff;border-right:1px solid #808080;border-bottom:1px solid #808080;box-sizing:border-box;"></div><div style="left:499px;top:110.4px;width:493px;height:1px;background:#808080;"></div><div style="left:499px;top:111.4px;width:493px;height:1px;background:#fff;"></div><div style="left:500.3px;top:91px;width:1px;height:17px;background:#9a9792;"></div><div style="left:501.3px;top:91px;width:1px;height:17px;background:#eeede9;"></div><div style="left:563.8px;top:91px;width:1px;height:17px;background:#9a9792;"></div><div style="left:564.8px;top:91px;width:1px;height:17px;background:#eeede9;"></div><div style="left:570.5px;top:91px;width:1px;height:17px;background:#9a9792;"></div><div style="left:571.5px;top:91px;width:1px;height:17px;background:#eeede9;"></div><div style="left:634.2px;top:91px;width:1px;height:17px;background:#9a9792;"></div><div style="left:635.2px;top:91px;width:1px;height:17px;background:#eeede9;"></div><div style="left:697.1px;top:91px;width:1px;height:17px;background:#9a9792;"></div><div style="left:698.1px;top:91px;width:1px;height:17px;background:#eeede9;"></div><div style="left:703.8px;top:91px;width:1px;height:17px;background:#9a9792;"></div><div style="left:704.8px;top:91px;width:1px;height:17px;background:#eeede9;"></div><div style="left:767.7px;top:91px;width:1px;height:17px;background:#9a9792;"></div><div style="left:768.7px;top:91px;width:1px;height:17px;background:#eeede9;"></div><div style="left:830.0px;top:91px;width:1px;height:17px;background:#9a9792;"></div><div style="left:831.0px;top:91px;width:1px;height:17px;background:#eeede9;"></div><div style="left:893.3px;top:91px;width:1px;height:17px;background:#9a9792;"></div><div style="left:894.3px;top:91px;width:1px;height:17px;background:#eeede9;"></div><div style="left:957.2px;top:91px;width:1px;height:17px;background:#9a9792;"></div><div style="left:958.2px;top:91px;width:1px;height:17px;background:#eeede9;"></div><div class="t" style="left:525.00px;top:93.16px;font-size:9.5px;line-height:9.5px;color:#202020;">Refresh</div><div class="t" style="left:611.60px;top:92.90px;font-size:9.8px;line-height:9.8px;color:#202020;">Add</div><div class="t" style="left:661.20px;top:93.70px;font-size:9.8px;line-height:9.8px;color:#fbfbfb;">Update</div><div class="t" style="left:660.40px;top:92.90px;font-size:9.8px;line-height:9.8px;color:#9a9a9a;">Update</div><div class="t" style="left:735.50px;top:93.70px;font-size:9.8px;line-height:9.8px;color:#fbfbfb;">Delete</div><div class="t" style="left:734.70px;top:92.90px;font-size:9.8px;line-height:9.8px;color:#9a9a9a;">Delete</div><div class="t" style="left:803.10px;top:93.70px;font-size:9.8px;line-height:9.8px;color:#fbfbfb;">Close</div><div class="t" style="left:802.30px;top:92.90px;font-size:9.8px;line-height:9.8px;color:#9a9a9a;">Close</div><div class="t" style="left:866.40px;top:93.70px;font-size:9.8px;line-height:9.8px;color:#fbfbfb;">Open</div><div class="t" style="left:865.60px;top:92.90px;font-size:9.8px;line-height:9.8px;color:#9a9a9a;">Open</div><div class="t" style="left:921.30px;top:93.70px;font-size:9.8px;line-height:9.8px;color:#fbfbfb;">A Stock</div><div class="t" style="left:920.50px;top:92.90px;font-size:9.8px;line-height:9.8px;color:#9a9a9a;">A Stock</div><svg style="left:509px;top:90px;width:15px;height:15px" viewBox="0 0 15 15"><path d="M4 4.2H9.6a2.6 2.6 0 0 1 0.4 5.2H6.2c-1.2 0-1.2 2.4 0 2.4H9.5" stroke="#0a5a0a" stroke-width="3.6" fill="none" stroke-linecap="round"/><path d="M4 4.2H9.6a2.6 2.6 0 0 1 0.4 5.2H6.2c-1.2 0-1.2 2.4 0 2.4H9.5" stroke="#22d022" stroke-width="2" fill="none" stroke-linecap="round"/><path d="M1.6 4.2L5 1.6V6.8z" fill="#22d022" stroke="#0a5a0a" stroke-width="0.8"/></svg><svg style="left:579px;top:90px;width:15px;height:15px" viewBox="0 0 15 15"><path d="M3.5 2.2H8.5L12 6.2V12.6H3.5z" fill="#40e4e8" stroke="#101010" stroke-width="1.1"/><path d="M8.5 2.2V6.2H12" stroke="#101010" stroke-width="0.8" fill="none"/><path d="M1.5 1.5h1M12.5 1.5h1M1.5 13.5h1M12.5 13.5h1M7 14h1M1 7.5h1" stroke="#202020" stroke-width="1"/></svg><svg style="left:642px;top:91px;width:15px;height:14px" viewBox="0 0 15 14"><g transform="translate(0.8,0.8)" fill="#fbfbfb" stroke="#fbfbfb"><rect x="1" y="1.2" width="5" height="4.6" stroke="none"/><path d="M9 2.5v5" stroke-width="1.6"/><path d="M6.8 6.2h4.4L9 9z" stroke="none"/><path d="M6 9.2v3.4h7V9.2" stroke-width="1.2" fill="none"/></g><rect x="1" y="1.2" width="5" height="4.6" fill="#8a8a8a"/><path d="M2.6 2.4v2.2" stroke="#f0f0f0" stroke-width="0.9"/><path d="M9 2.5v5" stroke="#8a8a8a" stroke-width="1.6"/><path d="M6.8 6.2h4.4L9 9z" fill="#8a8a8a"/><path d="M6 9.2v3.4h7V9.2" stroke="#8a8a8a" stroke-width="1.2" fill="none"/></svg><svg style="left:712.6px;top:91.2px;width:15px;height:15px" viewBox="0 0 15 15"><rect x="0" y="0" width="13.9" height="13.1" fill="#858590"/><path d="M4 1.6v1.2M4 4.8v8.3" stroke="#f4f4f4" stroke-width="1.3"/><path d="M14.3 0.5v13.5H0.5" stroke="#fbfbfb" stroke-width="0.8" fill="none"/></svg><svg style="left:775px;top:90.5px;width:16px;height:15px" viewBox="0 0 16 15"><g stroke="#fbfbfb" stroke-width="1.3" transform="translate(0.7,0.7)"><path d="M7.7 1v13M1.5 6h12.4M1.5 1.2l12.4 12.4M13.9 1.2L1.5 13.6"/></g><g stroke="#8c8c8c" stroke-width="1.5"><path d="M7.7 1v13M1.5 6h12.4M1.5 1.2l12.4 12.4M13.9 1.2L1.5 13.6"/></g><rect x="5.6" y="4.6" width="4.2" height="3" fill="#d4d0c8"/><path d="M7.7 3.8v4.8" stroke="#8c8c8c" stroke-width="1.5"/></svg><svg style="left:838px;top:90.5px;width:16px;height:15px" viewBox="0 0 16 15"><g stroke="#fbfbfb" transform="translate(0.7,0.7)"><path d="M6.8 0.5v14M8.6 0.5v14" stroke-width="1.2"/><path d="M1 5.5h13.5" stroke-width="2"/><path d="M3 8h9.5L8 12.5z" stroke="none" fill="#fbfbfb"/></g><path d="M6.8 0.5v14M8.6 0.5v14" stroke="#8c8c8c" stroke-width="1.2"/><path d="M1 5.5h13.5" stroke="#8c8c8c" stroke-width="2"/><path d="M3 8h9.5L8 12.5z" fill="#8c8c8c"/><path d="M7.7 1v13" stroke="#e8e8e8" stroke-width="0.6"/></svg><svg style="left:901px;top:91px;width:16px;height:14px" viewBox="0 0 16 14"><circle cx="11" cy="6.8" r="4.8" fill="#fbfbfb"/><rect x="1.8" y="7.2" width="4" height="4.5" fill="#fbfbfb"/><circle cx="10.3" cy="6.1" r="4.6" fill="#808080"/><rect x="1.1" y="6.5" width="4" height="4.5" fill="#808080"/><path d="M5 9.5h3.5" stroke="#c8c8c8" stroke-width="1"/></svg><div style="left:497.4px;top:121.9px;width:10.5px;height:10.2px;background:#fff;border-top:1px solid #808080;border-left:1px solid #808080;border-bottom:1px solid #fff;border-right:1px solid #fff;box-sizing:border-box;"></div><div style="left:498.4px;top:122.9px;width:8.5px;height:8.2px;border-top:1px solid #404040;border-left:1px solid #404040;border-bottom:1px solid #d4d0c8;border-right:1px solid #d4d0c8;box-sizing:border-box;"></div><svg style="left:499px;top:123.5px;width:7px;height:7px" viewBox="0 0 7 7"><path d="M0.5 3.5l2 2 4-5" stroke="#000" stroke-width="1.6" fill="none"/></svg><div style="left:502px;top:116.5px;width:10px;height:1.2px;background:#2020c0;"></div><div class="t" style="left:513.60px;top:120.74px;font-size:13.3px;line-height:13.3px;color:#404040;transform:scaleY(1.1);transform-origin:0 11.26px;">:Activate WO</div><div style="left:804px;top:113.8px;width:178px;height:23.6px;background:#ffffc8;border-top:1.5px solid #404040;border-left:1.5px solid #404040;border-bottom:1px solid #606060;border-right:1px solid #606060;box-sizing:border-box;"></div><div style="left:998.2px;top:87px;width:167.2px;height:26.3px;background:#ebe8eb;border-top:1.5px solid #404040;border-left:1.5px solid #404040;border-bottom:1.5px solid #404040;border-right:1.5px solid #404040;box-sizing:border-box;"></div><div class="t" style="left:1019.50px;top:90.81px;font-size:17px;line-height:17px;color:#0c0cb0;font-weight:bold;">202403-LM0002</div><div style="left:497px;top:146.3px;width:497px;height:10.90px;overflow:hidden;"><div class="t" style="left:33.50px;top:-4.36px;font-size:13.3px;line-height:13.3px;color:#4848c8;transform:scaleY(1.1);transform-origin:0 11.26px;">Select:</div></div><div style="left:497px;top:146.3px;width:497px;height:11.70px;overflow:hidden;"><div class="t" style="left:162.70px;top:-3.56px;font-size:13.3px;line-height:13.3px;color:#404040;transform:scaleY(1.1);transform-origin:0 11.26px;">A/C Reg:</div></div><div style="left:497px;top:146.3px;width:497px;height:11.70px;overflow:hidden;"><div class="t" style="left:283.80px;top:-3.56px;font-size:13.3px;line-height:13.3px;color:#404040;transform:scaleY(1.1);transform-origin:0 11.26px;">A/C Type:</div></div><div style="left:497px;top:146.3px;width:497px;height:11.70px;overflow:hidden;"><div class="t" style="left:412.50px;top:-3.56px;font-size:13.3px;line-height:13.3px;color:#404040;transform:scaleY(1.1);transform-origin:0 11.26px;">A/C Serial No:</div></div><div class="t" style="left:1061.00px;top:142.74px;font-size:13.3px;line-height:13.3px;color:#404040;transform:scaleY(1.1);transform-origin:0 11.26px;">Authority:</div><div style="left:497px;top:146.3px;width:497px;height:10.70px;overflow:hidden;"><div class="t" style="left:238.00px;top:-4.56px;font-size:13.3px;line-height:13.3px;color:#e02828;transform:scaleY(1.1);transform-origin:0 11.26px;">*</div></div><div style="left:497px;top:146.3px;width:497px;height:10.70px;overflow:hidden;"><div class="t" style="left:356.60px;top:-4.56px;font-size:13.3px;line-height:13.3px;color:#e02828;transform:scaleY(1.1);transform-origin:0 11.26px;">*</div></div><div class="t" style="left:1004.50px;top:142.74px;font-size:13.3px;line-height:13.3px;color:#e02828;">*</div><div class="t" style="left:1134.20px;top:142.74px;font-size:13.3px;line-height:13.3px;color:#e02828;">*</div><div style="left:497.6px;top:158.6px;width:117.4px;height:22px;background:#c8c7cc;border-top:2px solid #505050;border-left:2px solid #505050;border-bottom:1.2px solid #f4f4f4;border-right:1.5px solid #505050;box-sizing:border-box;"></div><div class="t" style="left:500.00px;top:161.90px;font-size:13.7px;line-height:13.7px;color:#000;font-weight:bold;">RA-00002</div><div style="left:600.6px;top:160px;width:13.4px;height:19.5px;background:#d4d0c8;border-top:1px solid #fff;border-left:1px solid #fff;border-bottom:1px solid #404040;border-right:1px solid #404040;box-sizing:border-box;"></div><div style="left:601.6px;top:177.5px;width:11.4px;height:1px;background:#808080;"></div><div style="left:612.0px;top:161px;width:1px;height:17.5px;background:#808080;"></div><svg style="left:603.30px;top:167.75px;width:8px;height:5px" viewBox="0 0 8 5"><path d="M0.5 0.5h7l-3.5 4z" fill="#000"/></svg><div style="left:627.1px;top:158.2px;width:118.7px;height:23.4px;background:#fff;border-top:1.5px solid #404040;border-left:1.5px solid #404040;border-bottom:1px solid #505050;border-right:1px solid #505050;box-sizing:border-box;"></div><div class="t" style="left:627.10px;top:160.95px;font-size:14px;line-height:14px;color:#0c0cb0;font-weight:bold;width:118.7px;text-align:center;">RA-00002</div><div style="left:751.2px;top:158.2px;width:130.5px;height:23.4px;background:#fff;border-top:1.5px solid #404040;border-left:1.5px solid #404040;border-bottom:1px solid #505050;border-right:1px solid #505050;box-sizing:border-box;"></div><div class="t" style="left:751.20px;top:160.95px;font-size:14px;line-height:14px;color:#0c0cb0;font-weight:bold;width:130.5px;text-align:center;">B737-800</div><div style="left:887.2px;top:158.6px;width:130.2px;height:23.1px;background:#fff;border-top:1.5px solid #404040;border-left:1.5px solid #404040;border-bottom:1px solid #505050;border-right:1px solid #505050;box-sizing:border-box;"></div><div class="t" style="left:887.20px;top:160.95px;font-size:14px;line-height:14px;color:#0c0cb0;font-weight:bold;width:130.2px;text-align:center;">32658</div><div style="left:1028px;top:159.4px;width:129.8px;height:21.3px;background:#fff;border-top:2px solid #505050;border-left:2px solid #505050;border-bottom:1.2px solid #f4f4f4;border-right:1.5px solid #505050;box-sizing:border-box;"></div><div class="t" style="left:1031.00px;top:162.15px;font-size:14px;line-height:14px;color:#0c0cb0;font-weight:bold;">EASA</div><div style="left:1144.4px;top:161px;width:13px;height:18.5px;background:#d4d0c8;border-top:1px solid #fff;border-left:1px solid #fff;border-bottom:1px solid #404040;border-right:1px solid #404040;box-sizing:border-box;"></div><div style="left:1145.4px;top:177.5px;width:11px;height:1px;background:#808080;"></div><div style="left:1155.4px;top:162px;width:1px;height:16.5px;background:#808080;"></div><svg style="left:1146.90px;top:168.25px;width:8px;height:5px" viewBox="0 0 8 5"><path d="M0.5 0.5h7l-3.5 4z" fill="#000"/></svg><div style="left:497.6px;top:192.4px;width:661px;height:134.5px;border:1px solid #808080;box-sizing:border-box;"></div><div style="left:498.6px;top:193.4px;width:659px;height:132.5px;border:1px solid #fff;box-sizing:border-box;border-right:none;border-bottom:none;"></div><div style="left:497.6px;top:326.9px;width:662px;height:1px;background:#fff;"></div><div style="left:1158.6px;top:192.4px;width:1px;height:135.5px;background:#fff;"></div><div style="left:503px;top:186px;width:58px;height:10px;background:#d4d0c8;"></div><div class="t" style="left:505.50px;top:187.19px;font-size:11px;line-height:11px;color:#000080;font-weight:bold;">Customer:</div><div class="t" style="left:520.40px;top:204.14px;font-size:13.3px;line-height:13.3px;color:#404040;transform:scaleY(1.1);transform-origin:0 11.26px;">Customer Name:</div><div class="t" style="left:649.60px;top:203.54px;font-size:13.3px;line-height:13.3px;color:#e02828;">*</div><div style="left:509.4px;top:220.5px;width:414.6px;height:20.5px;background:#fff;border-top:1.5px solid #404040;border-left:1.5px solid #404040;border-bottom:1px solid #505050;border-right:1px solid #505050;box-sizing:border-box;"></div><div class="t" style="left:511.00px;top:223.87px;font-size:13.5px;line-height:13.5px;color:#0c0cb0;font-weight:bold;">AIR Bulgaria</div><div class="t" style="left:964.30px;top:204.06px;font-size:13.4px;line-height:13.4px;color:#404040;transform:scaleY(1.1);transform-origin:0 11.34px;">Customer WO Reference:</div><div class="t" style="left:1142.30px;top:203.54px;font-size:13.3px;line-height:13.3px;color:#e02828;">*</div><div style="left:934.5px;top:221px;width:213px;height:20px;background:#fff;border-top:1.5px solid #404040;border-left:1.5px solid #404040;border-bottom:1px solid #505050;border-right:1px solid #505050;box-sizing:border-box;"></div><div class="t" style="left:991.00px;top:223.62px;font-size:13.8px;line-height:13.8px;color:#0c0cb0;font-weight:bold;">AB-01022020-1</div><div class="t" style="left:520.40px;top:248.86px;font-size:13.4px;line-height:13.4px;color:#404040;transform:scaleY(1.1);transform-origin:0 11.34px;">Customer Contact Details:</div><div style="left:509.4px;top:265px;width:625px;height:56px;background:#fff;border-top:1.5px solid #404040;border-left:1.5px solid #404040;border-bottom:1px solid #505050;border-right:1px solid #505050;box-sizing:border-box;"></div><div style="left:1134px;top:265.2px;width:13.9px;height:55px;background:#e9e7e3;"></div><div style="left:1134px;top:265.2px;width:13.9px;height:13px;background:#d4d0c8;border-top:1px solid #fff;border-left:1px solid #fff;border-bottom:1px solid #404040;border-right:1px solid #404040;box-sizing:border-box;"></div><div style="left:1135px;top:276.2px;width:11.9px;height:1px;background:#808080;"></div><div style="left:1145.9px;top:266.2px;width:1px;height:11px;background:#808080;"></div><svg style="left:1137.5px;top:269.7px;width:7px;height:4px" viewBox="0 0 7 4"><path d="M0 4h7L3.5 0z" fill="#a0a0a0"/></svg><div style="left:1134px;top:307.2px;width:13.9px;height:13px;background:#d4d0c8;border-top:1px solid #fff;border-left:1px solid #fff;border-bottom:1px solid #404040;border-right:1px solid #404040;box-sizing:border-box;"></div><div style="left:1135px;top:318.2px;width:11.9px;height:1px;background:#808080;"></div><div style="left:1145.9px;top:308.2px;width:1px;height:11px;background:#808080;"></div><svg style="left:1137.5px;top:311.7px;width:7px;height:4px" viewBox="0 0 7 4"><path d="M0 0h7L3.5 4z" fill="#a0a0a0"/></svg><div style="left:497.6px;top:343.4px;width:661px;height:107px;border:1px solid #808080;box-sizing:border-box;"></div><div style="left:498.6px;top:344.4px;width:659px;height:105px;border:1px solid #fff;box-sizing:border-box;border-right:none;border-bottom:none;"></div><div style="left:497.6px;top:450.4px;width:662px;height:1px;background:#fff;"></div><div style="left:1158.6px;top:343.4px;width:1px;height:108px;background:#fff;"></div><div style="left:508.9px;top:371.4px;width:625.3px;height:73.6px;background:#fff;border-top:1.5px solid #404040;border-left:1.5px solid #404040;border-bottom:1px solid #505050;border-right:1px solid #505050;box-sizing:border-box;"></div><div class="t" style="left:602.50px;top:373.85px;font-size:14px;line-height:14px;color:#0c0cb0;font-weight:bold;width:200px;text-align:right;">Daily check after FL#AB1624</div><div style="left:1134px;top:371.4px;width:13.9px;height:73px;background:#e9e7e3;"></div><div style="left:1134px;top:371.4px;width:13.9px;height:13px;background:#d4d0c8;border-top:1px solid #fff;border-left:1px solid #fff;border-bottom:1px solid #404040;border-right:1px solid #404040;box-sizing:border-box;"></div><div style="left:1135px;top:382.4px;width:11.9px;height:1px;background:#808080;"></div><div style="left:1145.9px;top:372.4px;width:1px;height:11px;background:#808080;"></div><svg style="left:1137.5px;top:375.9px;width:7px;height:4px" viewBox="0 0 7 4"><path d="M0 4h7L3.5 0z" fill="#a0a0a0"/></svg><div style="left:1134px;top:431.4px;width:13.9px;height:13px;background:#d4d0c8;border-top:1px solid #fff;border-left:1px solid #fff;border-bottom:1px solid #404040;border-right:1px solid #404040;box-sizing:border-box;"></div><div style="left:1135px;top:442.4px;width:11.9px;height:1px;background:#808080;"></div><div style="left:1145.9px;top:432.4px;width:1px;height:11px;background:#808080;"></div><svg style="left:1137.5px;top:435.9px;width:7px;height:4px" viewBox="0 0 7 4"><path d="M0 0h7L3.5 4z" fill="#a0a0a0"/></svg><div class="t" style="left:530.50px;top:462.14px;font-size:13.3px;line-height:13.3px;color:#404040;transform:scaleY(1.1);transform-origin:0 11.26px;">STA:</div><div class="t" style="left:567.10px;top:461.94px;font-size:13.3px;line-height:13.3px;color:#e02828;">*</div><div style="left:497.2px;top:478.2px;width:105.7px;height:21.4px;background:#fff;border-top:2px solid #505050;border-left:2px solid #505050;border-bottom:1.2px solid #f4f4f4;border-right:1.5px solid #505050;box-sizing:border-box;"></div><div class="t" style="left:500.00px;top:481.57px;font-size:13.5px;line-height:13.5px;color:#0c0cb0;font-weight:bold;">OSL</div><div style="left:588.9px;top:480px;width:13px;height:18.5px;background:#d4d0c8;border-top:1px solid #fff;border-left:1px solid #fff;border-bottom:1px solid #404040;border-right:1px solid #404040;box-sizing:border-box;"></div><div style="left:589.9px;top:496.5px;width:11px;height:1px;background:#808080;"></div><div style="left:599.9px;top:481px;width:1px;height:16.5px;background:#808080;"></div><svg style="left:591.40px;top:487.25px;width:8px;height:5px" viewBox="0 0 8 5"><path d="M0.5 0.5h7l-3.5 4z" fill="#000"/></svg><div class="t" style="left:626.60px;top:462.14px;font-size:13.3px;line-height:13.3px;color:#404040;transform:scaleY(1.1);transform-origin:0 11.26px;">WO Date:</div><div class="t" style="left:698.30px;top:461.94px;font-size:13.3px;line-height:13.3px;color:#e02828;">*</div><div style="left:709px;top:454.4px;width:37.4px;height:21.1px;background:#c8c8f8;border-top:1px solid #fff;border-left:1px solid #fff;border-bottom:1px solid #404040;border-right:1px solid #404040;box-sizing:border-box;"></div><svg style="left:720.3px;top:456.9px;width:14px;height:13px" viewBox="0 0 14 13"><rect x="0" y="0" width="13.8" height="12.9" fill="#10106a"/><g fill="#f4f4f4"><rect x="1" y="3" width="2" height="2.6"/><rect x="4" y="3" width="2" height="2.6"/><rect x="7" y="3" width="2" height="2.6"/><rect x="10" y="3" width="2.4" height="2.6"/><rect x="1" y="7.4" width="2" height="3.2"/><rect x="4" y="7.4" width="2" height="3.2"/><rect x="7" y="7.4" width="2" height="3.2"/><rect x="10" y="7.4" width="2.4" height="3.2"/></g><rect x="5.5" y="1" width="3" height="0.8" fill="#c0c0ff"/><rect x="12" y="4" width="1" height="6" fill="#c04040"/><rect x="0" y="11.6" width="13.8" height="1.3" fill="#000"/></svg><div style="left:615.2px;top:478px;width:131.2px;height:22.8px;background:#c8c7cc;border-top:1.5px solid #404040;border-left:1.5px solid #404040;border-bottom:1px solid #505050;border-right:1px solid #505050;box-sizing:border-box;"></div><div class="t" style="left:639.50px;top:480.73px;font-size:16.5px;line-height:16.5px;color:#0c0cb0;font-weight:bold;">11/03/2024</div><div class="t" style="left:778.60px;top:462.40px;font-size:13.0px;line-height:13.0px;color:#404040;transform:scaleY(1.1);transform-origin:0 11.00px;">Originator:</div><div class="t" style="left:850.80px;top:461.94px;font-size:13.3px;line-height:13.3px;color:#e02828;">*</div><div style="left:757px;top:478.5px;width:105.7px;height:21.3px;background:#fff;border-top:2px solid #505050;border-left:2px solid #505050;border-bottom:1.2px solid #f4f4f4;border-right:1.5px solid #505050;box-sizing:border-box;"></div><div class="t" style="left:760.00px;top:481.57px;font-size:13.5px;line-height:13.5px;color:#0c0cb0;font-weight:bold;">TLT</div><div style="left:848.7px;top:480px;width:13px;height:18.5px;background:#d4d0c8;border-top:1px solid #fff;border-left:1px solid #fff;border-bottom:1px solid #404040;border-right:1px solid #404040;box-sizing:border-box;"></div><div style="left:849.7px;top:496.5px;width:11px;height:1px;background:#808080;"></div><div style="left:859.7px;top:481px;width:1px;height:16.5px;background:#808080;"></div><svg style="left:851.20px;top:487.25px;width:8px;height:5px" viewBox="0 0 8 5"><path d="M0.5 0.5h7l-3.5 4z" fill="#000"/></svg><div style="left:874.4px;top:478px;width:285.2px;height:23px;background:#c8c7cc;border-top:1.5px solid #404040;border-left:1.5px solid #404040;border-bottom:1px solid #505050;border-right:1px solid #505050;box-sizing:border-box;"></div><div class="t" style="left:964.30px;top:481.12px;font-size:16.4px;line-height:16.4px;color:#0c0cb0;font-weight:bold;">TALVAR TARI</div><div class="t" style="left:508.30px;top:514.73px;font-size:13.2px;line-height:13.2px;color:#404040;transform:scaleY(1.1);transform-origin:0 11.17px;">Remarks:</div><div style="left:497px;top:530.4px;width:649.5px;height:91.6px;background:#fff;border-top:1.5px solid #404040;border-left:1.5px solid #404040;border-bottom:1px solid #505050;border-right:1px solid #505050;box-sizing:border-box;"></div><div style="left:1146.3px;top:530.4px;width:13.9px;height:91.6px;background:#e9e7e3;"></div><div style="left:1146.3px;top:530.4px;width:13.9px;height:13px;background:#d4d0c8;border-top:1px solid #fff;border-left:1px solid #fff;border-bottom:1px solid #404040;border-right:1px solid #404040;box-sizing:border-box;"></div><div style="left:1147.3px;top:541.4px;width:11.9px;height:1px;background:#808080;"></div><div style="left:1158.2px;top:531.4px;width:1px;height:11px;background:#808080;"></div><svg style="left:1149.8px;top:534.9px;width:7px;height:4px" viewBox="0 0 7 4"><path d="M0 4h7L3.5 0z" fill="#a0a0a0"/></svg><div style="left:1146.3px;top:609.0px;width:13.9px;height:13px;background:#d4d0c8;border-top:1px solid #fff;border-left:1px solid #fff;border-bottom:1px solid #404040;border-right:1px solid #404040;box-sizing:border-box;"></div><div style="left:1147.3px;top:620.0px;width:11.9px;height:1px;background:#808080;"></div><div style="left:1158.2px;top:610.0px;width:1px;height:11px;background:#808080;"></div><svg style="left:1149.8px;top:613.5px;width:7px;height:4px" viewBox="0 0 7 4"><path d="M0 0h7L3.5 4z" fill="#a0a0a0"/></svg><div style="left:487px;top:268px;width:214.3px;height:124.8px;background:#d4d0c8;border-top:1px solid #f0eee8;border-left:1px solid #f0eee8;border-bottom:1.5px solid #404040;border-right:1.5px solid #404040;box-sizing:border-box;"></div><div style="left:488.9px;top:270.2px;width:209.9px;height:15px;background:#0a246a;"></div><div class="t" style="left:491.20px;top:272.96px;font-size:9.5px;line-height:9.5px;color:#fff;font-weight:bold;">Add New WO</div><div style="left:683px;top:272.2px;width:14px;height:10.5px;background:#d4d0c8;border-top:1px solid #fff;border-left:1px solid #fff;border-bottom:1px solid #404040;border-right:1px solid #404040;box-sizing:border-box;"></div><div style="left:684px;top:280.7px;width:12px;height:1px;background:#808080;"></div><div style="left:695px;top:273.2px;width:1px;height:8.5px;background:#808080;"></div><svg style="left:686px;top:273.5px;width:8px;height:8px" viewBox="0 0 8 8"><path d="M1 1l6 6M7 1L1 7" stroke="#909090" stroke-width="1.3"/></svg><div style="left:488.9px;top:285.2px;width:210.5px;height:68.8px;background:#fff;"></div><svg style="left:507px;top:306px;width:28px;height:28px" viewBox="0 0 28 28"><defs><radialGradient id="qg" cx="40%" cy="35%" r="65%"><stop offset="0" stop-color="#6a9ae8"/><stop offset="0.6" stop-color="#2a5ac0"/><stop offset="1" stop-color="#18388a"/></radialGradient></defs><circle cx="14" cy="14" r="13" fill="url(#qg)" stroke="#8aa0c8" stroke-width="1"/><path d="M9.5 10.5a4.5 4 0 1 1 6.5 3.5c-1.5 1-2 1.5-2 3.5" stroke="#fff" stroke-width="3" fill="none"/><circle cx="14" cy="21.5" r="1.8" fill="#fff"/></svg><div class="t" style="left:543.00px;top:316.33px;font-size:9.3px;line-height:9.3px;color:#202020;">Confirm Add New Work Order !</div><div style="left:554px;top:362.6px;width:64.4px;height:19.1px;background:#d4d0c8;border-top:1px solid #fff;border-left:1px solid #fff;border-bottom:1px solid #404040;border-right:1px solid #404040;box-sizing:border-box;"></div><div style="left:555px;top:379.70000000000005px;width:62.400000000000006px;height:1px;background:#808080;"></div><div style="left:616.4px;top:363.6px;width:1px;height:17.1px;background:#808080;"></div><div class="t" style="left:554.00px;top:367.41px;font-size:9.5px;line-height:9.5px;color:#202020;width:64.4px;text-align:center;">Yes</div><div style="left:626.3px;top:362.9px;width:64.3px;height:19.1px;border:1px solid #000;box-sizing:border-box;"></div><div style="left:627.3px;top:363.9px;width:62.3px;height:17.1px;background:#d4d0c8;border-top:1px solid #fff;border-left:1px solid #fff;border-bottom:1px solid #404040;border-right:1px solid #404040;box-sizing:border-box;"></div><div style="left:628.3px;top:379.0px;width:60.3px;height:1px;background:#808080;"></div><div style="left:687.5999999999999px;top:364.9px;width:1px;height:15.100000000000001px;background:#808080;"></div><div class="t" style="left:626.30px;top:367.71px;font-size:9.5px;line-height:9.5px;color:#202020;width:64.3px;text-align:center;">No</div><svg style="left:0;top:0;width:1184px;height:629px" viewBox="0 0 1184 629"><path d="M590.5 371.7L649.9 480L676.9 459.9z" fill="#1c9af5"/><circle cx="664.8" cy="472.2" r="16.8" fill="#1c9af5" stroke="#282828" stroke-width="1.3"/><circle cx="664.8" cy="472.2" r="15.6" fill="none" stroke="#f0f8ff" stroke-width="1"/></svg><div class="t" style="left:645px;top:465.5px;width:40px;text-align:center;font-family:'Liberation Mono',monospace;font-weight:bold;font-size:12.5px;line-height:16px;color:#fff;">13</div>
</body></html>
